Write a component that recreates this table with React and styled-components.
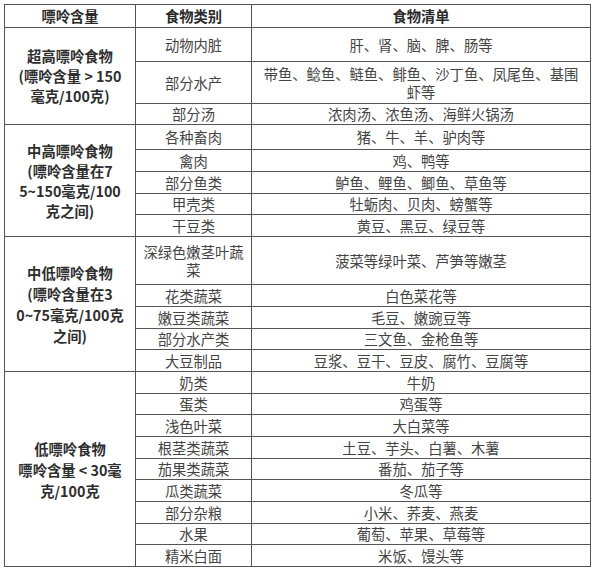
import React from 'react'
import styled, { createGlobalStyle } from 'styled-components'

const GlobalStyle = createGlobalStyle`
  html, body {
    margin: 0;
    padding: 0;
    background: #ffffff;
  }
  body {
    font-family: "Noto Sans CJK SC", "Noto Sans", sans-serif;
  }
`

const groups = [
  {
    lines: ['超高嘌呤食物', '(嘌呤含量 > 150', '毫克/100克)'],
    lh: 20,
    rows: [
      ['动物内脏', '肝、肾、脑、脾、肠等', 34],
      ['部分水产', '带鱼、鲶鱼、鲢鱼、鲱鱼、沙丁鱼、凤尾鱼、基围虾等', 42],
      ['部分汤', '浓肉汤、浓鱼汤、海鲜火锅汤', 21],
    ],
  },
  {
    lines: ['中高嘌呤食物', '(嘌呤含量在7', '5~150毫克/100', '克之间)'],
    lh: 20,
    rows: [
      ['各种畜肉', '猪、牛、羊、驴肉等', 25],
      ['禽肉', '鸡、鸭等', 22],
      ['部分鱼类', '鲈鱼、鲤鱼、鲫鱼、草鱼等', 22],
      ['甲壳类', '牡蛎肉、贝肉、螃蟹等', 21],
      ['干豆类', '黄豆、黑豆、绿豆等', 22],
    ],
  },
  {
    lines: ['中低嘌呤食物', '(嘌呤含量在3', '0~75毫克/100克', '之间)'],
    lh: 21,
    rows: [
      ['深绿色嫩茎叶蔬菜', '菠菜等绿叶菜、芦笋等嫩茎', 48],
      ['花类蔬菜', '白色菜花等', 22],
      ['嫩豆类蔬菜', '毛豆、嫩豌豆等', 22],
      ['部分水产类', '三文鱼、金枪鱼等', 21],
      ['大豆制品', '豆浆、豆干、豆皮、腐竹、豆腐等', 22],
    ],
  },
  {
    lines: ['低嘌呤食物', '嘌呤含量 < 30毫', '克/100克'],
    lh: 21,
    rows: [
      ['奶类', '牛奶', 22],
      ['蛋类', '鸡蛋等', 21],
      ['浅色叶菜', '大白菜等', 22],
      ['根茎类蔬菜', '土豆、芋头、白薯、木薯', 22],
      ['茄果类蔬菜', '番茄、茄子等', 21],
      ['瓜类蔬菜', '冬瓜等', 22],
      ['部分杂粮', '小米、荞麦、燕麦', 22],
      ['水果', '葡萄、苹果、草莓等', 21],
      ['精米白面', '米饭、馒头等', 22],
    ],
  },
]

const Page = styled.div`
  padding: 4px 6px 0 4px;
`

const Table = styled.table`
  width: 587px;
  border-collapse: collapse;
  table-layout: fixed;
  border: 1.5px solid #4a4a4a;
`

const Row = styled.tr`
  height: ${(p) => p.$h}px;
`

const HeadCell = styled.th`
  border: 1px solid #555;
  font-size: 14.3px;
  font-weight: 700;
  color: #2a2a2a;
  text-align: center;
  padding: 0;
  line-height: 18px;
`

const GroupCell = styled.td`
  border: 1px solid #555;
  font-size: 14.3px;
  font-weight: 700;
  color: #2e2e2e;
  text-align: center;
  vertical-align: middle;
  padding: 0 4px;
  line-height: ${(p) => p.$lh}px;
`

const Cell = styled.td`
  border: 1px solid #555;
  font-size: 14.3px;
  color: #444;
  text-align: center;
  vertical-align: middle;
  padding: 0 ${(p) => p.$pad}px;
  line-height: 18px;
`

export default function App() {
  return (
    <Page>
      <GlobalStyle />
      <Table>
        <colgroup>
          <col style={{ width: 131 }} />
          <col style={{ width: 116 }} />
          <col />
        </colgroup>
        <tbody>
          <Row $h={23}>
            <HeadCell>嘌呤含量</HeadCell>
            <HeadCell>食物类别</HeadCell>
            <HeadCell>食物清单</HeadCell>
          </Row>
          {groups.map((g) =>
            g.rows.map(([cat, list, h], i) => (
              <Row key={cat} $h={h}>
                {i === 0 && (
                  <GroupCell rowSpan={g.rows.length} $lh={g.lh}>
                    {g.lines.map((l, j) => (
                      <React.Fragment key={j}>
                        {l}
                        {j < g.lines.length - 1 && <br />}
                      </React.Fragment>
                    ))}
                  </GroupCell>
                )}
                <Cell $pad={4}>{cat}</Cell>
                <Cell $pad={8}>{list}</Cell>
              </Row>
            ))
          )}
        </tbody>
      </Table>
    </Page>
  )
}
